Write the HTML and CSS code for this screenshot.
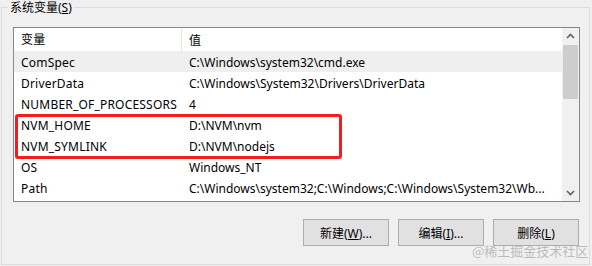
FILE: index.html
```html
<!DOCTYPE html>
<html lang="zh-CN">
	<head>
		<meta charset="UTF-8" />
		<title>系统变量</title>
		<link rel="stylesheet" href="styles.css">
	</head>
	<body>
		<div class="group">
			<span class="group-title">系统变量(<u>S</u>)</span>

			<div class="listview">
				<div class="list-main">
					<div class="list-head">
						<div class="col-name">变量</div>
						<div class="col-value">值</div>
					</div>
					<div class="list-rows">
						<div class="row selected"><div class="col-name">ComSpec</div><div class="col-value">C:\Windows\system32\cmd.exe</div></div>
						<div class="row"><div class="col-name">DriverData</div><div class="col-value">C:\Windows\System32\Drivers\DriverData</div></div>
						<div class="row"><div class="col-name">NUMBER_OF_PROCESSORS</div><div class="col-value">4</div></div>
						<div class="row"><div class="col-name">NVM_HOME</div><div class="col-value">D:\NVM\nvm</div></div>
						<div class="row"><div class="col-name">NVM_SYMLINK</div><div class="col-value">D:\NVM\nodejs</div></div>
						<div class="row"><div class="col-name">OS</div><div class="col-value">Windows_NT</div></div>
						<div class="row"><div class="col-name">Path</div><div class="col-value">C:\Windows\system32;C:\Windows;C:\Windows\System32\Wb...</div></div>
						<!-- highlight drawn over the two NVM rows -->
						<div class="mark"></div>
					</div>
				</div>
				<div class="scrollbar">
					<svg class="arrow" width="17" height="17" viewBox="0 0 17 17"><path d="M5 10 L8.5 6.5 L12 10" fill="none" stroke="#606060" stroke-width="1.6"/></svg>
					<div class="track"><div class="thumb"></div></div>
					<svg class="arrow" width="17" height="17" viewBox="0 0 17 17"><path d="M5 7 L8.5 10.5 L12 7" fill="none" stroke="#606060" stroke-width="1.6"/></svg>
				</div>
			</div>

			<div class="buttons">
				<button class="btn">新建(<u>W</u>)...</button>
				<button class="btn">编辑(<u>I</u>)...</button>
				<button class="btn">删除(<u>L</u>)</button>
			</div>
		</div>
		<div class="watermark">@稀土掘金技术社区</div>
	</body>
</html>
```

FILE: styles.css
```css
:root {
	--face: #f0f0f0;
	--frame: #dcdcdc;
	--list-border: #828790;
	--text: #000;
}

* {
	margin: 0;
	padding: 0;
	box-sizing: border-box;
}

body {
	font-family: "Noto Sans", "Noto Sans CJK SC", sans-serif;
	font-size: 12px;
	color: var(--text);
	background: var(--face);
	width: 592px;
	height: 266px;
	overflow: hidden;
	position: relative;
}

.group {
	position: relative;
	margin: 7px 0 0 1px;
	width: 589px;
	height: 258px;
	border: 1px solid var(--frame);
	padding: 19px 9px 0 11px;
}

.group-title {
	position: absolute;
	top: -8px;
	left: 6px;
	padding: 0 2px;
	background: var(--face);
	line-height: 15px;
}

.listview {
	display: flex;
	width: 567px;
	height: 175px;
	border: 1px solid var(--list-border);
	background: #fff;
}

.list-main {
	flex: 1;
	overflow: hidden;
}

.list-head,
.row {
	display: flex;
	align-items: center;
	white-space: nowrap;
}

.list-head {
	height: 23px;
}

.col-name {
	width: 168px;
	padding-left: 7px;
	letter-spacing: 0.2px;
}

.col-value {
	padding-left: 7px;
}

.list-head .col-name {
	border-right: 1px solid #e5e5e5;
	height: 23px;
	line-height: 23px;
}

.list-rows {
	position: relative;
}

.row {
	height: 21px;
	padding-top: 1px;
}

.row.selected {
	background: #efefef;
}

.mark {
	position: absolute;
	left: 1px;
	top: 63px;
	width: 327px;
	height: 45px;
	border: 3px solid #f41c1c;
	border-radius: 3px;
}

.scrollbar {
	width: 17px;
	display: flex;
	flex-direction: column;
	background: var(--face);
}

.arrow {
	display: block;
	flex: none;
}

.track {
	flex: 1;
	padding: 0 1px;
}

.thumb {
	width: 15px;
	height: 54px;
	background: #cdcdcd;
}

.buttons {
	display: flex;
	justify-content: flex-end;
	gap: 9px;
	margin-top: 17px;
	padding-right: 1px;
}

.btn {
	width: 86px;
	height: 27px;
	font: inherit;
	color: var(--text);
	background: #e1e1e1;
	border: 1px solid #adadad;
}

.watermark {
	position: absolute;
	left: 472px;
	top: 241px;
	font-size: 13px;
	color: rgba(170, 170, 170, 0.75);
	font-family: "Noto Sans CJK SC", sans-serif;
}
```
